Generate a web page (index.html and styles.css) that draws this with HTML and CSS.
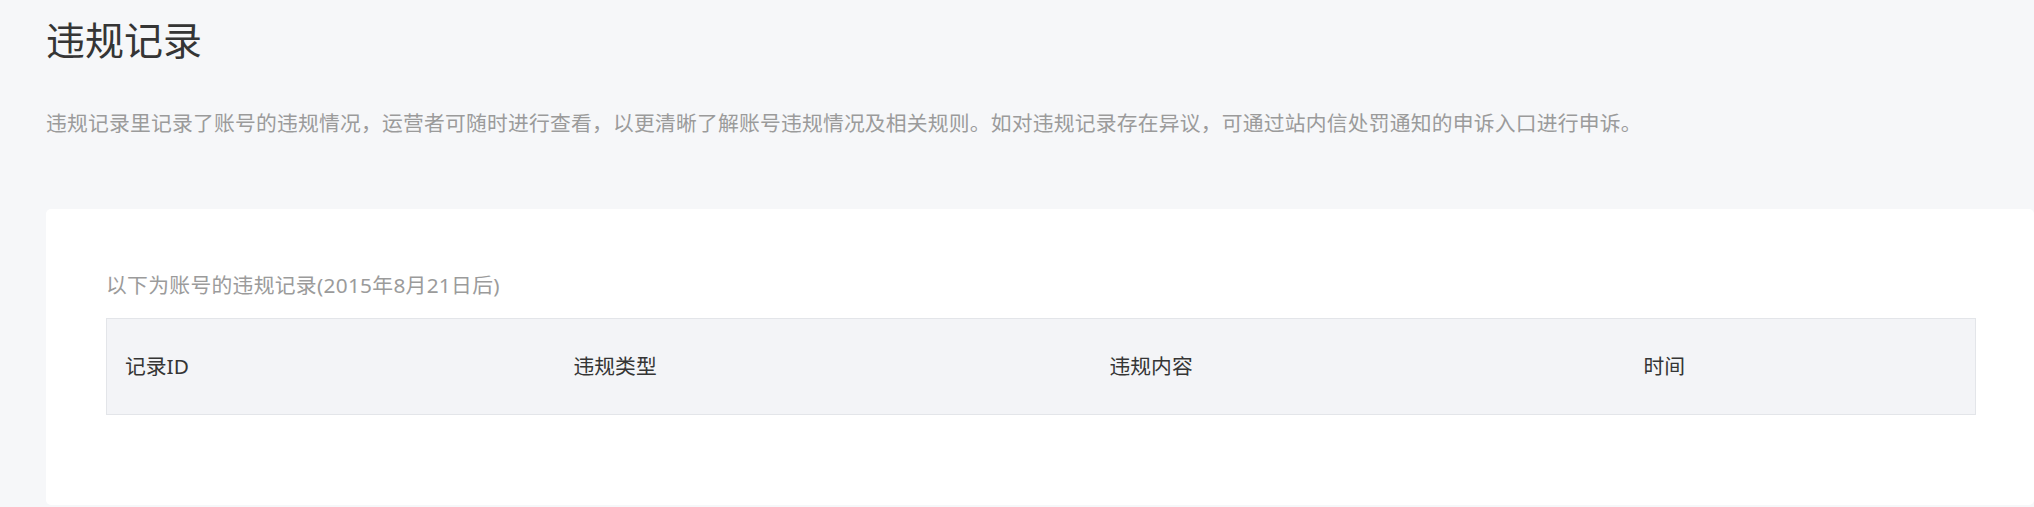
FILE: index.html
```html
<!DOCTYPE html>
<html lang="zh-CN">
<head>
<meta charset="utf-8">
<title>违规记录</title>
<link rel="stylesheet" href="styles.css">
</head>
<body>
<div class="page">
  <h1 class="title">违规记录</h1>
  <p class="desc">违规记录里记录了账号的违规情况，运营者可随时进行查看，以更清晰了解账号违规情况及相关规则。如对违规记录存在异议，可通过站内信处罚通知的申诉入口进行申诉。</p>
  <section class="card">
    <p class="subtitle">以下为账号的违规记录(2015年8月21日后)</p>
    <table class="records">
      <colgroup>
        <col class="c1"><col class="c2"><col class="c3"><col class="c4">
      </colgroup>
      <thead>
        <tr>
          <th>记录ID</th>
          <th>违规类型</th>
          <th>违规内容</th>
          <th>时间</th>
        </tr>
      </thead>
    </table>
  </section>
</div>
</body>
</html>
```

FILE: styles.css
```css
html, body {
  margin: 0;
  padding: 0;
  background: #f6f7f9;
}
body {
  font-family: "Noto Sans", "Noto Sans CJK SC", sans-serif;
  overflow: hidden;
}
.page {
  display: flex;
  flex-direction: column;
  align-items: flex-start;
  padding: 20px 0 0 46px;
}
.title {
  margin: 0;
  font-size: 39px;
  line-height: 39px;
  font-weight: 400;
  color: #353535;
}
.desc {
  margin: 54px 0 0;
  font-size: 20.8px;
  line-height: 21px;
  letter-spacing: 0.2px;
  color: #9b9b9b;
}
.card {
  margin-top: 75px;
  width: 1988px;
  box-sizing: border-box;
  padding: 66px 58px 90px 60px;
  background: #ffffff;
  border-radius: 5px;
}
.subtitle {
  margin: 0 0 22px;
  font-size: 20.8px;
  line-height: 21px;
  letter-spacing: 0.3px;
  color: #9b9b9b;
}
.records {
  width: 1870px;
  table-layout: fixed;
  border-collapse: collapse;
  border: 1px solid #e3e5e9;
  background: #f3f4f7;
}
.records .c1 { width: 447px; }
.records .c2 { width: 536px; }
.records .c3 { width: 534px; }
.records th {
  height: 95px;
  padding: 0 0 0 18px;
  text-align: left;
  font-weight: 400;
  font-size: 20.8px;
  line-height: 21px;
  color: #353535;
}
.records th + th {
  padding-left: 20px;
}
```
